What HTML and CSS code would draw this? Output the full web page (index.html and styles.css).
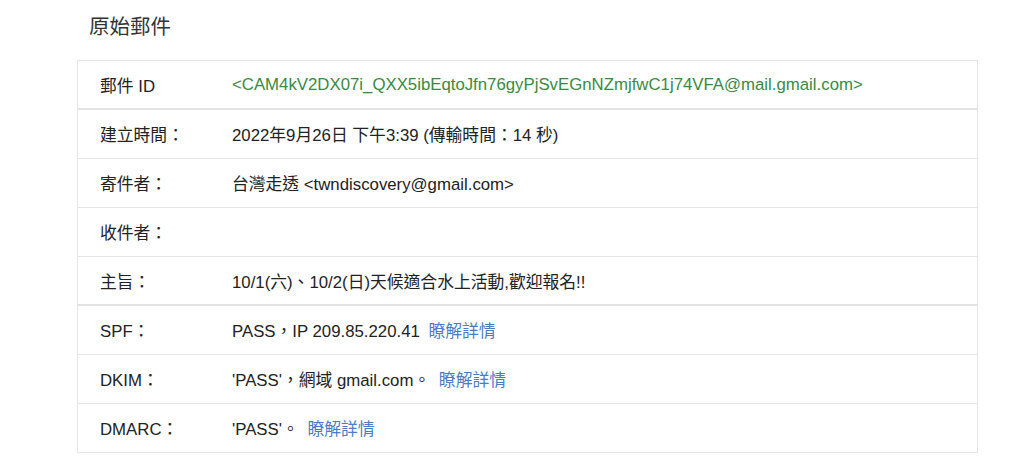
FILE: index.html
```html
<!doctype html>
<html lang="zh-Hant-TW">
  <head>
    <meta charset="utf-8">
    <title>原始郵件</title>
    <meta name="viewport" content="width=device-width, initial-scale=1">
    <link rel="stylesheet" href="styles.css">
  </head>
  <body>
    <div class="page">
      <h1 class="title">原始郵件</h1>
      <div class="details">
        <div class="row row-strong">
          <div class="label">郵件 ID</div>
          <div class="value msgid">&lt;CAM4kV2DX07i_QXX5ibEqtoJfn76gyPjSvEGnNZmjfwC1j74VFA@mail.gmail.com&gt;</div>
        </div>
        <div class="row">
          <div class="label">建立時間：</div>
          <div class="value">2022年9月26日 下午3:39 (傳輸時間：14 秒)</div>
        </div>
        <div class="row">
          <div class="label">寄件者：</div>
          <div class="value">台灣走透 &lt;twndiscovery@gmail.com&gt;</div>
        </div>
        <div class="row">
          <div class="label">收件者：</div>
          <div class="value"></div>
        </div>
        <div class="row row-strong">
          <div class="label">主旨：</div>
          <div class="value">10/1(六)、10/2(日)天候適合水上活動,歡迎報名!!</div>
        </div>
        <div class="row">
          <div class="label">SPF：</div>
          <div class="value">PASS，IP 209.85.220.41 <a class="more" href="#">瞭解詳情</a></div>
        </div>
        <div class="row">
          <div class="label">DKIM：</div>
          <div class="value">'PASS'，網域 gmail.com。 <a class="more" href="#">瞭解詳情</a></div>
        </div>
        <div class="row">
          <div class="label">DMARC：</div>
          <div class="value">'PASS'。 <a class="more" href="#">瞭解詳情</a></div>
        </div>
      </div>
    </div>
  </body>
</html>
```

FILE: styles.css
```css
body {
  margin: 0;
  background: #ffffff;
  color: #222222;
  font-family: "Liberation Sans", Arial, "Noto Sans CJK TC", "Noto Sans CJK HK", sans-serif;
  font-size: 16.8px;
}
.page {
  padding: 0 46px 0 77px;
}
.title {
  margin: 0;
  padding: 14px 0 0 12px;
  height: 61px;
  box-sizing: border-box;
  font-size: 20.5px;
  line-height: 26px;
  font-weight: normal;
  color: #333333;
}
.details {
  border: 1px solid #e6e6e6;
  border-top: none;
  border-bottom: none;
  box-shadow: 0 -1px 0 #e6e6e6;
}
.row {
  display: flex;
  align-items: center;
  height: 48px;
  border-bottom: 1px solid #e6e6e6;
}
.row-strong {
  border-bottom: 2px solid #e3e3e3;
  height: 47px;
}
.label {
  width: 154px;
  padding-left: 22px;
  flex-shrink: 0;
  box-sizing: border-box;
}
.value {
  flex: 1;
}
.msgid {
  color: #3a8a3f;
}
.more {
  color: #4a7cc9;
  text-decoration: none;
  margin-left: 4px;
}
```
